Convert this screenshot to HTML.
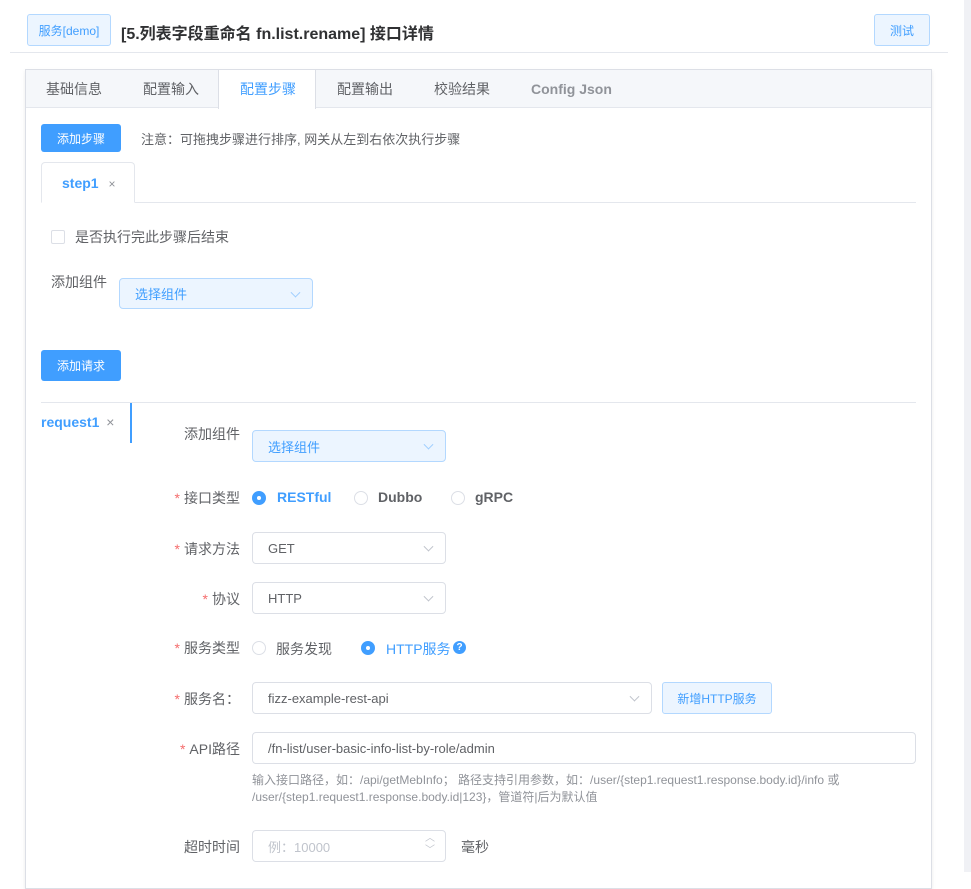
<!DOCTYPE html>
<html><head><meta charset="utf-8"><style>
*{box-sizing:border-box;margin:0;padding:0}
body{width:971px;height:872px;overflow:hidden;background:#fff;font-family:"Liberation Sans","Noto Sans CJK SC",sans-serif;font-size:14px;color:#606266;position:relative}
.a{position:absolute}
.btnl{background:#ecf5ff;border:1px solid #b3d8ff;color:#409eff;font-size:12px;border-radius:3px;display:flex;align-items:center;justify-content:center}
.btnp{background:#409eff;color:#fff;font-size:12px;border-radius:3px;display:flex;align-items:center;justify-content:center}
.sel{border:1px solid #dcdfe6;border-radius:4px;background:#fff;font-size:13px;color:#606266;display:flex;align-items:center;padding-left:15px}
.sel.blue{background:#ecf5ff;border-color:#b3d8ff;color:#409eff}
.arr{position:absolute;right:13px;top:50%;width:7px;height:7px;border-right:1px solid #c0c4cc;border-bottom:1px solid #c0c4cc;transform:translateY(-70%) rotate(45deg)}
.lbl{position:absolute;right:731px;font-size:14px;color:#606266;white-space:nowrap}
.lbl i{color:#f56c6c;font-style:normal;margin-right:4px}
.radio{position:absolute;width:14px;height:14px;border-radius:50%;border:1px solid #dcdfe6;background:#fff}
.radio.on{border-color:#409eff;background:#409eff}
.radio.on:after{content:"";position:absolute;left:4px;top:4px;width:4px;height:4px;border-radius:50%;background:#fff}
.tab{position:absolute;top:69px;height:40px;line-height:40px;font-size:14px;color:#606266}
</style></head><body>
<div class="a btnl" style="left:27px;top:14px;width:84px;height:32px">服务[demo]</div>
<div class="a" style="left:121px;top:20px;font-size:16px;font-weight:bold;color:#303133">[5.列表字段重命名 fn.list.rename] 接口详情</div>
<div class="a btnl" style="left:874px;top:14px;width:56px;height:32px">测试</div>
<div class="a" style="left:10px;top:52px;width:938px;height:1px;background:#e4e7ed"></div>
<div class="a" style="left:964px;top:0;width:7px;height:872px;background:#f0f1f5"></div>

<div class="a" style="left:25px;top:69px;width:907px;height:820px;border:1px solid #dcdfe6;box-shadow:0 2px 4px rgba(0,0,0,.08)"></div>
<div class="a" style="left:26px;top:70px;width:905px;height:38px;background:#f5f7fa;border-bottom:1px solid #e4e7ed"></div>
<div class="a" style="left:218px;top:70px;width:98px;height:39px;background:#fff;border-left:1px solid #dcdfe6;border-right:1px solid #dcdfe6"></div>
<div class="tab" style="left:46px">基础信息</div>
<div class="tab" style="left:143px">配置输入</div>
<div class="tab" style="left:240px;color:#409eff">配置步骤</div>
<div class="tab" style="left:337px">配置输出</div>
<div class="tab" style="left:434px">校验结果</div>
<div class="tab" style="left:531px;font-weight:bold;color:#909399">Config Json</div>

<div class="a btnp" style="left:41px;top:124px;width:80px;height:28px">添加步骤</div>
<div class="a" style="left:141px;top:129px;font-size:13px;color:#606266">注意：可拖拽步骤进行排序, 网关从左到右依次执行步骤</div>
<div class="a" style="left:41px;top:202px;width:875px;height:1px;background:#e4e7ed"></div>
<div class="a" style="left:41px;top:162px;width:94px;height:41px;border:1px solid #e4e7ed;border-bottom:1px solid #fff;border-radius:4px 4px 0 0;background:#fff;color:#409eff;font-size:14px;font-weight:bold;line-height:40px;padding-left:20px">step1 <span style="font-weight:normal;font-size:12px;color:#909399;margin-left:6px">×</span></div>

<div class="a" style="left:51px;top:230px;width:14px;height:14px;border:1px solid #dcdfe6;border-radius:2px"></div>
<div class="a" style="left:75px;top:227px">是否执行完此步骤后结束</div>
<div class="a" style="left:51px;top:272px">添加组件</div>
<div class="a sel blue" style="left:119px;top:278px;width:194px;height:31px">选择组件<span class="arr" style="border-color:#a0cfff"></span></div>

<div class="a btnp" style="left:41px;top:350px;width:80px;height:31px">添加请求</div>
<div class="a" style="left:41px;top:402px;width:875px;height:1px;background:#e4e7ed"></div>
<div class="a" style="left:41px;top:414px;color:#409eff;font-weight:bold">request1 <span style="font-weight:normal;color:#909399;margin-left:3px">×</span></div>
<div class="a" style="left:130px;top:403px;width:2px;height:40px;background:#409eff"></div>

<div class="lbl" style="top:424px">添加组件</div>
<div class="a sel blue" style="left:252px;top:430px;width:194px;height:32px">选择组件<span class="arr" style="border-color:#a0cfff"></span></div>

<div class="lbl" style="top:488px"><i>*</i>接口类型</div>
<div class="radio on" style="left:252px;top:491px"></div>
<div class="a" style="left:277px;top:489px;color:#409eff;font-weight:bold">RESTful</div>
<div class="radio" style="left:354px;top:491px"></div>
<div class="a" style="left:378px;top:489px;font-weight:bold">Dubbo</div>
<div class="radio" style="left:451px;top:491px"></div>
<div class="a" style="left:475px;top:489px;font-weight:bold">gRPC</div>

<div class="lbl" style="top:539px"><i>*</i>请求方法</div>
<div class="a sel" style="left:252px;top:532px;width:194px;height:32px">GET<span class="arr"></span></div>
<div class="lbl" style="top:589px"><i>*</i>协议</div>
<div class="a sel" style="left:252px;top:582px;width:194px;height:32px">HTTP<span class="arr"></span></div>

<div class="lbl" style="top:638px"><i>*</i>服务类型</div>
<div class="radio" style="left:252px;top:641px"></div>
<div class="a" style="left:276px;top:639px">服务发现</div>
<div class="radio on" style="left:361px;top:641px"></div>
<div class="a" style="left:386px;top:639px;color:#409eff">HTTP服务</div>
<div class="a" style="left:453px;top:641px;width:13px;height:13px;border-radius:50%;background:#409eff;color:#fff;font-size:10px;font-weight:bold;text-align:center;line-height:13px">?</div>

<div class="lbl" style="top:689px"><i>*</i>服务名：</div>
<div class="a sel" style="left:252px;top:682px;width:400px;height:32px">fizz-example-rest-api<span class="arr"></span></div>
<div class="a btnl" style="left:662px;top:682px;width:110px;height:32px">新增HTTP服务</div>

<div class="lbl" style="top:739px"><i>*</i>API路径</div>
<div class="a sel" style="left:252px;top:732px;width:664px;height:32px">/fn-list/user-basic-info-list-by-role/admin</div>
<div class="a" style="left:252px;top:772px;font-size:12px;color:#909399;line-height:17px;width:640px">输入接口路径，如：/api/getMebInfo； 路径支持引用参数，如：/user/{step1.request1.response.body.id}/info 或<br>/user/{step1.request1.response.body.id|123}，管道符|后为默认值</div>

<div class="lbl" style="top:837px">超时时间</div>
<div class="a sel" style="left:252px;top:830px;width:194px;height:32px;color:#c0c4cc">例：10000<span style="position:absolute;right:10px;top:2px;font-size:10px;color:#c0c4cc;line-height:12px;text-align:center">︿<br>﹀</span></div>
<div class="a" style="left:461px;top:837px">毫秒</div>
</body></html>
